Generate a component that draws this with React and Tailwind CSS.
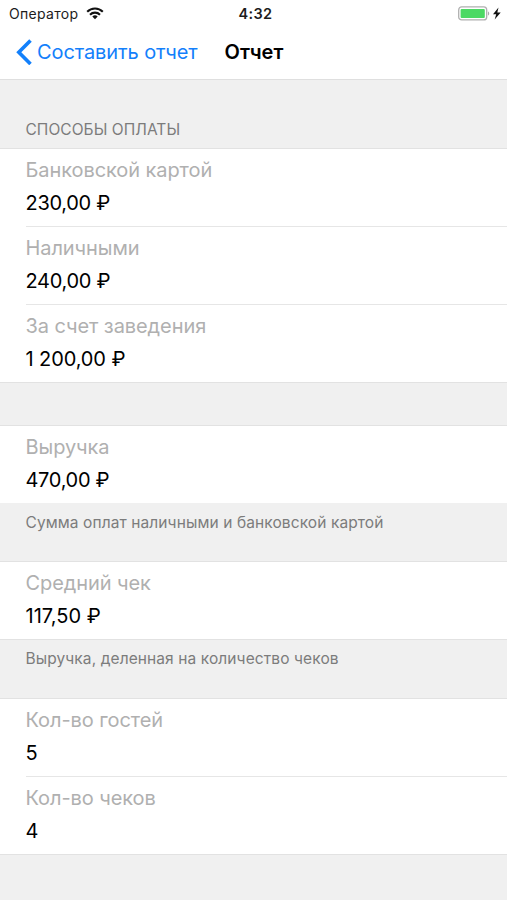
import React from 'react';

const SECTIONS = [
  {
    header: 'СПОСОБЫ ОПЛАТЫ',
    gap: 'h-[68px]',
    rows: [
      { label: 'Банковской картой', value: '230,00 ₽' },
      { label: 'Наличными', value: '240,00 ₽' },
      { label: 'За счет заведения', value: '1 200,00 ₽', tracking: 'tracking-[-0.1px]' },
    ],
  },
  {
    gap: 'h-[42px]',
    rows: [{ label: 'Выручка', value: '470,00 ₽' }],
    footer: 'Сумма оплат наличными и банковской картой',
    plainEnd: true,
  },
  {
    gap: 'h-[17px]',
    rows: [{ label: 'Средний чек', value: '117,50 ₽', tracking: 'tracking-[0.05px]' }],
    footer: 'Выручка, деленная на количество чеков',
  },
  {
    gap: 'h-[18px]',
    rows: [
      { label: 'Кол-во гостей', value: '5' },
      { label: 'Кол-во чеков', value: '4' },
    ],
  },
];

const WifiIcon = () => (
  <svg width="18" height="13" viewBox="0 0 18 13" fill="none" stroke="#111" strokeWidth="2.1">
    <path d="M1.2 4.7a11 11 0 0 1 15.6 0" />
    <path d="M4 7.7a7.1 7.1 0 0 1 10 0" />
    <path d="M9 12.2 6.3 9.6a3.9 3.9 0 0 1 5.4 0z" fill="#111" stroke="none" />
  </svg>
);

const BatteryIcon = () => (
  <svg width="44" height="16" viewBox="0 0 44 16">
    <rect x="0.7" y="0.9" width="28" height="13" rx="3" fill="#fff" stroke="#b0b0b0" strokeWidth="1.3" />
    <rect x="2.6" y="2.9" width="24.2" height="9" rx="1" fill="#4cd964" />
    <path d="M30 5.5c1.6.5 1.6 3.6 0 4.1z" fill="#a9a9a9" />
    <path d="M40.5 1.4 35 8.2h3.2l-1.5 5.4 6-7.1h-3.4z" fill="#111" />
  </svg>
);

const StatusBar = () => (
  <div className="grid h-[27px] grid-cols-3 items-center pl-[9px] pr-[5px] text-[14px] text-[#1c1c1c]">
    <div className="flex items-center gap-2">
      <span className="tracking-[0.3px]">Оператор</span>
      <WifiIcon />
    </div>
    <span className="text-center text-[14.5px] font-semibold tracking-[0.3px]">4:32</span>
    <div className="flex justify-end">
      <BatteryIcon />
    </div>
  </div>
);

const NavBar = () => (
  <div className="flex h-[52px] items-center pb-[2px] pl-4 text-[20px]">
    <button type="button" className="flex items-center gap-1 text-[#1380fb]">
      <svg width="17" height="26" viewBox="0 0 17 26" fill="none" stroke="currentColor" strokeWidth="3.6">
        <path d="M14.5 1.6 2.8 13.3 14.5 25" />
      </svg>
      <span className="tracking-[-0.1px]">Составить отчет</span>
    </button>
    <h1 className="ml-[27px] font-semibold tracking-[0.05px] text-black">Отчет</h1>
  </div>
);

const Row = ({ label, value, divider, tracking = 'tracking-[-0.3px]' }) => (
  <div className="pl-[25.5px]">
    <div className={`h-[78px] pt-2 ${divider ? 'border-b border-[#e6e6e6]' : ''}`}>
      <div className="text-[20px] leading-[26px] tracking-[-0.08px] text-[#b0b0b0]">{label}</div>
      <div className={`mt-[7px] text-[20px] leading-[26px] text-black ${tracking}`}>{value}</div>
    </div>
  </div>
);

const Section = ({ header, gap, rows, footer, plainEnd }) => (
  <section>
    <div className={`${gap} flex items-end pb-2 pl-[25.5px] text-[15.5px] leading-5 tracking-[0.05px] text-[#7c7c7c]`}>
      {header}
    </div>
    <div className="border-t border-[#e2e2e2] bg-white">
      {rows.map((row, i) => (
        <Row key={row.label} {...row} divider={i < rows.length - 1} />
      ))}
      {/* closing hairline sits inside the last row */}
      <div className={`-mt-px h-px ${plainEnd ? 'bg-[#f0f0f0]' : 'bg-[#e2e2e2]'}`} />
    </div>
    {footer && (
      <p className="h-10 pl-[25.5px] pt-[9px] text-[15.5px] leading-5 tracking-[0.1px] text-[#7c7c7c]">{footer}</p>
    )}
  </section>
);

const App = () => (
  <div className="h-[900px] w-[507px] overflow-hidden bg-[#f0f0f0] font-['Inter','Noto_Sans',sans-serif]">
    <header className="border-b border-[#dfdfdf] bg-white">
      <StatusBar />
      <NavBar />
    </header>
    <main>
      {SECTIONS.map((section, i) => (
        <Section key={i} {...section} />
      ))}
    </main>
  </div>
);

export default App;
